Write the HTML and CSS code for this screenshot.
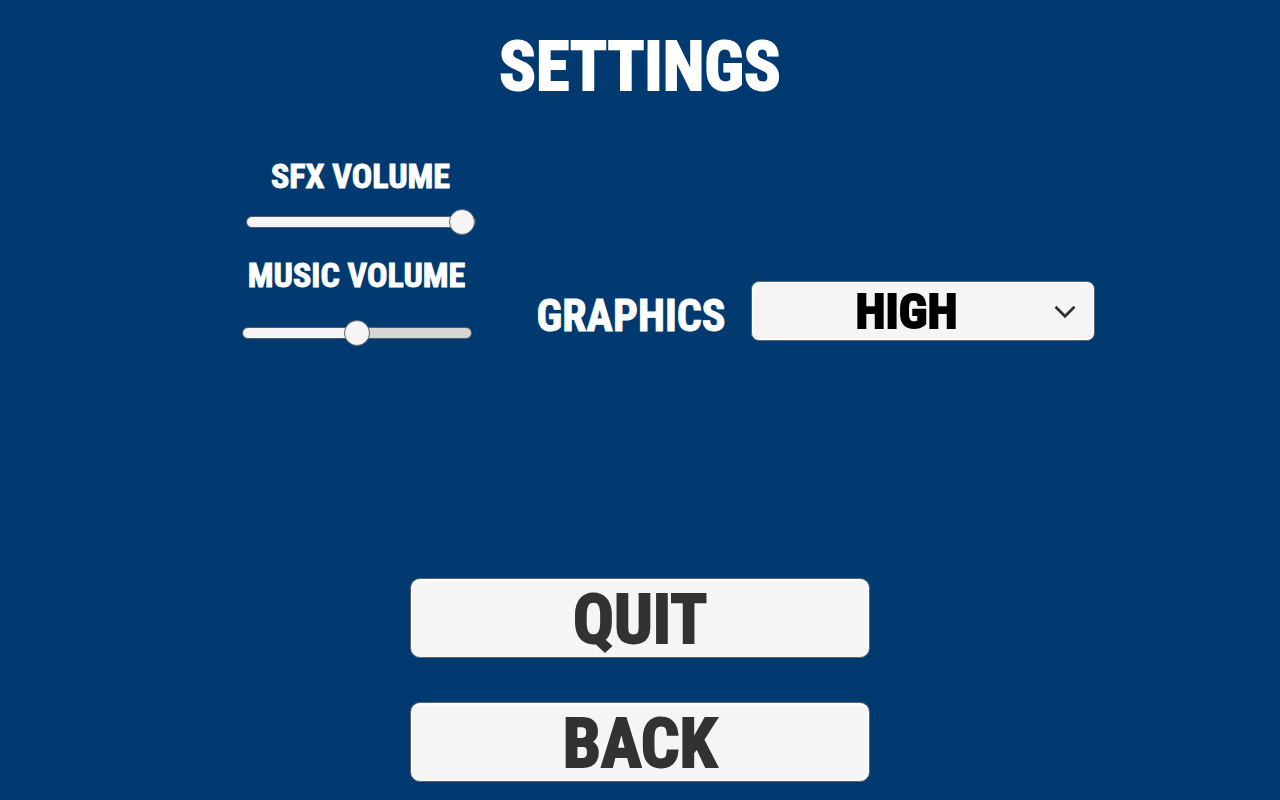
FILE: index.html
```html
<!DOCTYPE html>
<html lang="en">
<head>
<meta charset="utf-8">
<meta name="viewport" content="width=device-width, initial-scale=1">
<title>Settings</title>
<link rel="stylesheet" href="styles.css">
</head>
<body>
<main class="screen">
  <h1 class="title">SETTINGS</h1>
  <div class="options">
    <div class="volumes">
      <div class="volume volume-sfx">
        <label class="volume-label" for="sfx">SFX VOLUME</label>
        <input class="slider slider-full" id="sfx" type="range" min="0" max="100" value="100">
      </div>
      <div class="volume volume-music">
        <label class="volume-label" for="music">MUSIC VOLUME</label>
        <input class="slider slider-half" id="music" type="range" min="0" max="100" value="50">
      </div>
    </div>
    <div class="graphics">
      <label class="graphics-label" for="graphics">GRAPHICS</label>
      <div class="dropdown">
        <select class="dropdown-select" id="graphics">
          <option>HIGH</option>
        </select>
        <svg class="dropdown-arrow" viewBox="0 0 22 14" aria-hidden="true"><path d="M1.5 1.8 L11 11.2 L20.5 1.8" fill="none" stroke="#323232" stroke-width="2.8"/></svg>
      </div>
    </div>
  </div>
  <div class="actions">
    <button class="action" type="button">QUIT</button>
    <button class="action" type="button">BACK</button>
  </div>
</main>
</body>
</html>
```
FILE: styles.css
```css
* {
  box-sizing: border-box;
}

body {
  margin: 0;
  background: #003a70;
  color: #fff;
  font-family: "Roboto Condensed", "Liberation Sans Narrow", "Liberation Sans", sans-serif;
  font-weight: 700;
}

.screen {
  display: flex;
  flex-direction: column;
  min-height: 100vh;
  padding: 27px 0 18px;
}

.title {
  margin: 0;
  font-size: 68px;
  line-height: 80px;
  text-align: center;
  -webkit-text-stroke: 2px currentColor;
}

.options {
  display: flex;
  align-items: flex-end;
  justify-content: center;
  gap: 61px;
  margin-top: 49px;
  padding-left: 56px;
}

.volumes {
  display: flex;
  flex-direction: column;
  gap: 20px;
  width: 234px;
}

.volume {
  display: flex;
  flex-direction: column;
  align-items: center;
  width: 230px;
}

.volume-sfx {
  align-self: flex-end;
  gap: 13px;
}

.volume-music {
  align-self: flex-start;
  gap: 25px;
}

.volume-label {
  font-size: 34px;
  line-height: 40px;
  white-space: nowrap;
  -webkit-text-stroke: 1px currentColor;
}

.slider {
  appearance: none;
  width: 100%;
  height: 26px;
  margin: 0;
  background: transparent;
}

.slider::-webkit-slider-runnable-track {
  height: 12px;
  border: 1px solid #4d5d6b;
  border-radius: 6px;
}

.slider-full::-webkit-slider-runnable-track {
  background: #f5f5f5;
}

.slider-half::-webkit-slider-runnable-track {
  background: linear-gradient(to right, #f5f5f5 50%, #d6d6d4 50%);
}

.slider::-webkit-slider-thumb {
  appearance: none;
  width: 26px;
  height: 26px;
  margin-top: -8px;
  border: 1px solid #5c6670;
  border-radius: 50%;
  background: #f5f5f5;
}

.graphics {
  display: flex;
  align-items: center;
  gap: 24px;
  margin-bottom: 5px;
}

.graphics-label {
  width: 190px;
  padding-top: 10px;
  font-size: 44px;
  line-height: 50px;
  -webkit-text-stroke: 1px currentColor;
}

.dropdown {
  position: relative;
  width: 344px;
}

.dropdown-select {
  appearance: none;
  display: block;
  width: 100%;
  height: 60px;
  padding: 0 32px 0 0;
  border: 1px solid #5c6670;
  border-radius: 8px;
  background: #f5f5f5;
  box-shadow: inset 0 0 2px 1px #fff;
  color: #000;
  font: inherit;
  font-size: 49px;
  line-height: 60px;
  text-align: center;
  text-align-last: center;
  -webkit-text-stroke: 2px currentColor;
}

.dropdown-arrow {
  position: absolute;
  top: 24px;
  right: 19px;
  width: 22px;
  height: 14px;
  pointer-events: none;
}

.actions {
  display: flex;
  flex-direction: column;
  align-items: center;
  gap: 44px;
  margin-top: auto;
}

.action {
  width: 460px;
  max-width: 100%;
  height: 80px;
  padding: 4px 0 0;
  border: 1px solid #5c6670;
  border-radius: 10px;
  background: #f5f5f5;
  box-shadow: inset 0 1px 3px 1px #fff;
  color: #323232;
  font: inherit;
  font-size: 68px;
  line-height: 74px;
  -webkit-text-stroke: 2px currentColor;
}
```
